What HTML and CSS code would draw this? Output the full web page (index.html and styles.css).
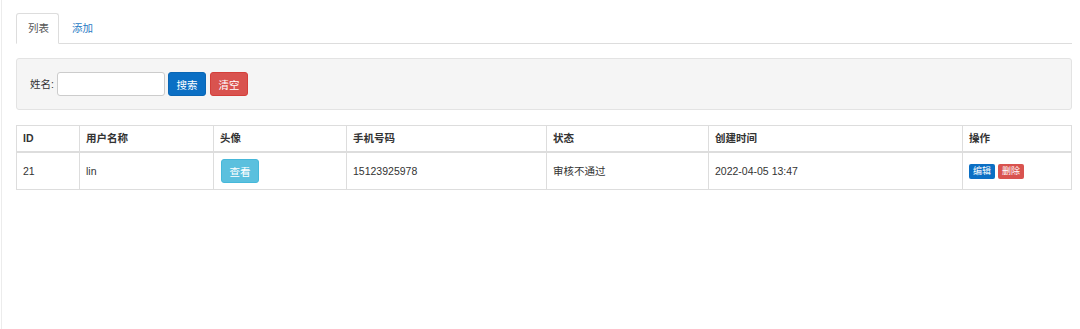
FILE: index.html
```html
<!DOCTYPE html>
<html lang="zh-CN">
<head>
	<meta charset="UTF-8">
	<title>用户列表</title>
	<link rel="stylesheet" href="styles.css">
</head>
<body>
<div class="page">
	<ul class="tabs">
		<li class="active"><a href="#">列表</a></li>
		<li><a href="#">添加</a></li>
	</ul>
	<div class="well">
		<label>姓名:</label>
		<input type="text" class="inp">
		<button class="btn btn-blue">搜索</button>
		<button class="btn btn-red">清空</button>
	</div>
	<table class="list">
		<thead>
			<tr>
				<th class="c-id">ID</th>
				<th class="c-name">用户名称</th>
				<th class="c-head">头像</th>
				<th class="c-tel">手机号码</th>
				<th class="c-state">状态</th>
				<th class="c-time">创建时间</th>
				<th>操作</th>
			</tr>
		</thead>
		<tbody>
			<tr>
				<td>21</td>
				<td>lin</td>
				<td><button class="btn btn-info">查看</button></td>
				<td>15123925978</td>
				<td>审核不通过</td>
				<td>2022-04-05 13:47</td>
				<td>
					<button class="btn-xs btn-blue">编辑</button>
					<button class="btn-xs btn-red">删除</button>
				</td>
			</tr>
		</tbody>
	</table>
</div>
</body>
</html>
```

FILE: styles.css
```css
*{
	margin: 0;
	padding: 0;
	box-sizing: border-box;
}
html,body{
	height: 100%;
}
body{
	font-family: "Liberation Sans", "Noto Sans CJK SC", sans-serif;
	font-size: 10.5px;
	line-height: 15px;
	color: #333;
	background: #fff;
}
li{
	list-style: none;
}
.page{
	margin-left: 1px;
	min-height: 100%;
	border-left: 1px solid #ececec;
	padding: 13px 8px 0 14px;
}
.tabs{
	display: flex;
	border-bottom: 1px solid #ddd;
}
.tabs li{
	margin-bottom: -1px;
	margin-right: 1px;
}
.tabs a{
	display: block;
	padding: 7px 10px 7px 11px;
	border: 1px solid transparent;
	border-radius: 3px 3px 0 0;
	color: #2a7bc4;
	text-decoration: none;
}
.tabs .active a{
	padding-right: 9px;
	color: #555;
	border-color: #ddd;
	border-bottom-color: #fff;
	background: #fff;
}
.well{
	margin-top: 14px;
	padding: 13px 13px;
	background: #f5f5f5;
	border: 1px solid #e3e3e3;
	border-radius: 3px;
	display: flex;
	align-items: center;
}
.well label{
	color: #333;
	margin-right: 3px;
}
.inp{
	width: 108px;
	height: 24px;
	border: 1px solid #ccc;
	border-radius: 3px;
	background: #fff;
	margin-right: 3px;
}
.btn{
	height: 24px;
	padding: 0 7.5px;
	border: 1px solid transparent;
	border-radius: 3px;
	color: #fff;
	font-family: inherit;
	font-size: 10.5px;
	margin-right: 4px;
}
.btn-blue{
	background: #0b6fc4;
	border-color: #0a66b4;
}
.btn-red{
	background: #d9534f;
	border-color: #d43f3a;
}
.btn-info{
	background: #5bc0de;
	border-color: #46b8da;
	margin: 0 0 0 1px;
}
.list{
	margin-top: 15px;
	width: 100%;
	border-collapse: collapse;
	table-layout: fixed;
	border: 1px solid #ddd;
}
.list th,.list td{
	border: 1px solid #ddd;
	text-align: left;
	vertical-align: middle;
}
.list th{
	padding: 5px 6px;
	font-weight: bold;
	border-bottom-width: 2px;
}
.list td{
	padding: 6px 6px;
	height: 37px;
}
.c-id{ width: 63px; }
.c-name{ width: 134px; }
.c-head{ width: 133px; }
.c-tel{ width: 200px; }
.c-state{ width: 162px; }
.c-time{ width: 254px; }
.btn-xs{
	padding: 1px 3px;
	border: 1px solid transparent;
	border-radius: 2px;
	color: #fff;
	font-family: inherit;
	font-size: 9px;
	line-height: 11px;
	vertical-align: middle;
}
```
